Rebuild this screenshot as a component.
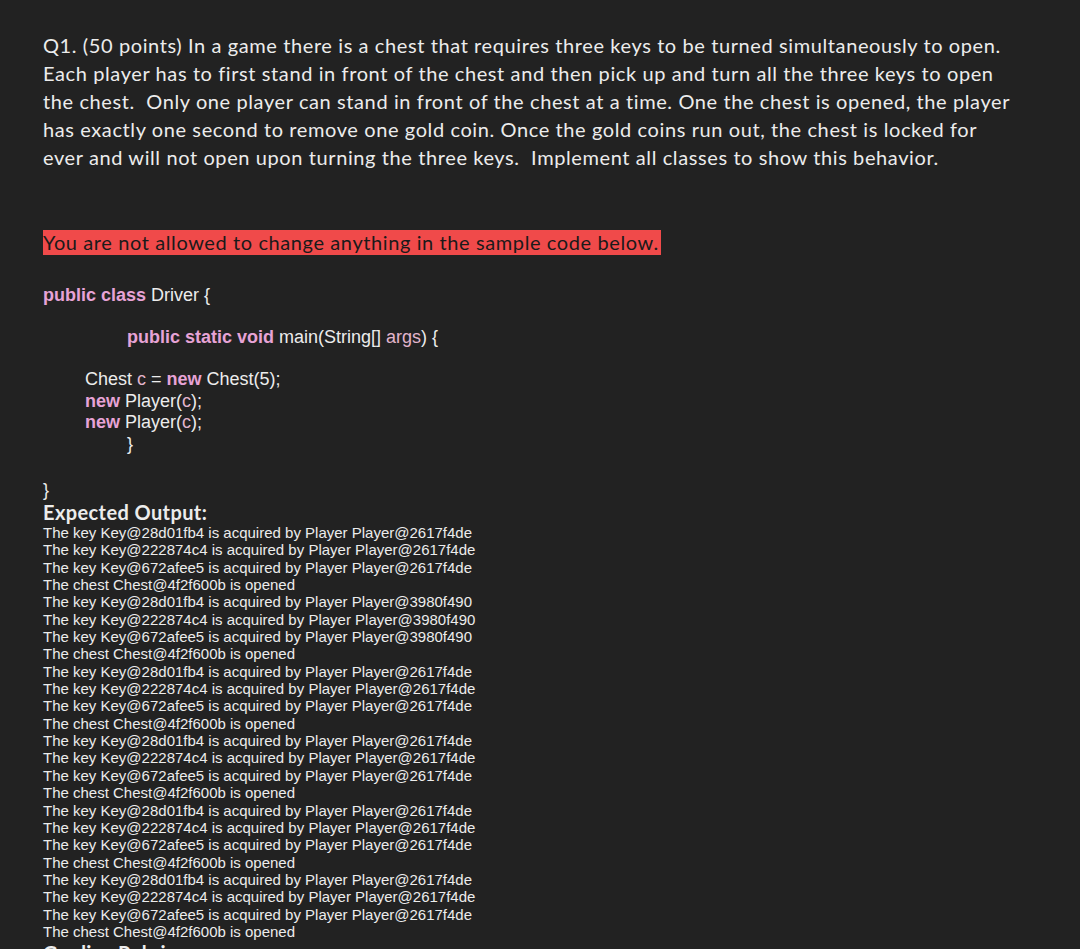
const keys = ["28d01fb4", "222874c4", "672afee5"];
const players = ["2617f4de", "3980f490", "2617f4de", "2617f4de", "2617f4de", "2617f4de"];

export default function App() {
  const lines: string[] = [];
  players.forEach((p) => {
    keys.forEach((k) => lines.push(`The key Key@${k} is acquired by Player Player@${p}`));
    lines.push("The chest Chest@4f2f600b is opened");
  });
  const pink = "text-[#e7a3d6] font-bold";
  const cal = { fontFamily: "Lato, 'Open Sans', sans-serif" };
  return (
    <div className="h-[949px] w-[1080px] overflow-hidden bg-[#222222] text-[#ececec] pl-[43px]">
      <p className="pt-[31px] text-[20px] leading-[28px] tracking-[0.6px] whitespace-nowrap" style={cal}>
        Q1. (50 points) In a game there is a chest that requires three keys to be turned simultaneously to open.<br />
        Each player has to first stand in front of the chest and then pick up and turn all the three keys to open<br />
        the chest. &nbsp;Only one player can stand in front of the chest at a time. One the chest is opened, the player<br />
        has exactly one second to remove one gold coin. Once the gold coins run out, the chest is locked for<br />
        ever and will not open upon turning the three keys. &nbsp;Implement all classes to show this behavior.
      </p>
      <div className="mt-[59px]">
        <span className="bg-[#f04a4a] text-[#1a1a1a] text-[20px] tracking-[0.6px] leading-[25px] inline-block pr-[2px]" style={cal}>
          You are not allowed to change anything in the sample code below.
        </span>
      </div>
      <div className="text-[18px]" style={{ fontFamily: "'Liberation Sans', Arial, sans-serif" }}>
        <div className="mt-[27px] leading-[24px]"><span className={pink}>public class</span> Driver {"{"}</div>
        <div className="mt-[18px] leading-[24px] pl-[84px]"><span className={pink}>public static void</span> main(String[] <span className="text-[#e3b5cc]">args</span>) {"{"}</div>
        <div className="mt-[20px] pl-[42px] leading-[21.5px]">
          <div>Chest <span className="text-[#e3b5cc]">c</span> = <span className={pink}>new</span> Chest(5);</div>
          <div><span className={pink}>new</span> Player(<span className="text-[#e3b5cc]">c</span>);</div>
          <div><span className={pink}>new</span> Player(<span className="text-[#e3b5cc]">c</span>);</div>
          <div className="pl-[42px]">{"}"}</div>
        </div>
        <div className="mt-[24px] leading-[22px]">{"}"}</div>
      </div>
      <div className="text-[20px] font-bold leading-[22px] tracking-[0.4px]" style={cal}>Expected Output:</div>
      <div className="mt-[1px] text-[15px] leading-[17.35px]" style={{ fontFamily: "'Liberation Sans', Arial, sans-serif" }}>
        {lines.map((l, i) => <div key={i}>{l}</div>)}
      </div>
      <div className="text-[20px] font-bold leading-[22px] mt-[2px]" style={cal}>Grading Rubric:</div>
    </div>
  );
}
